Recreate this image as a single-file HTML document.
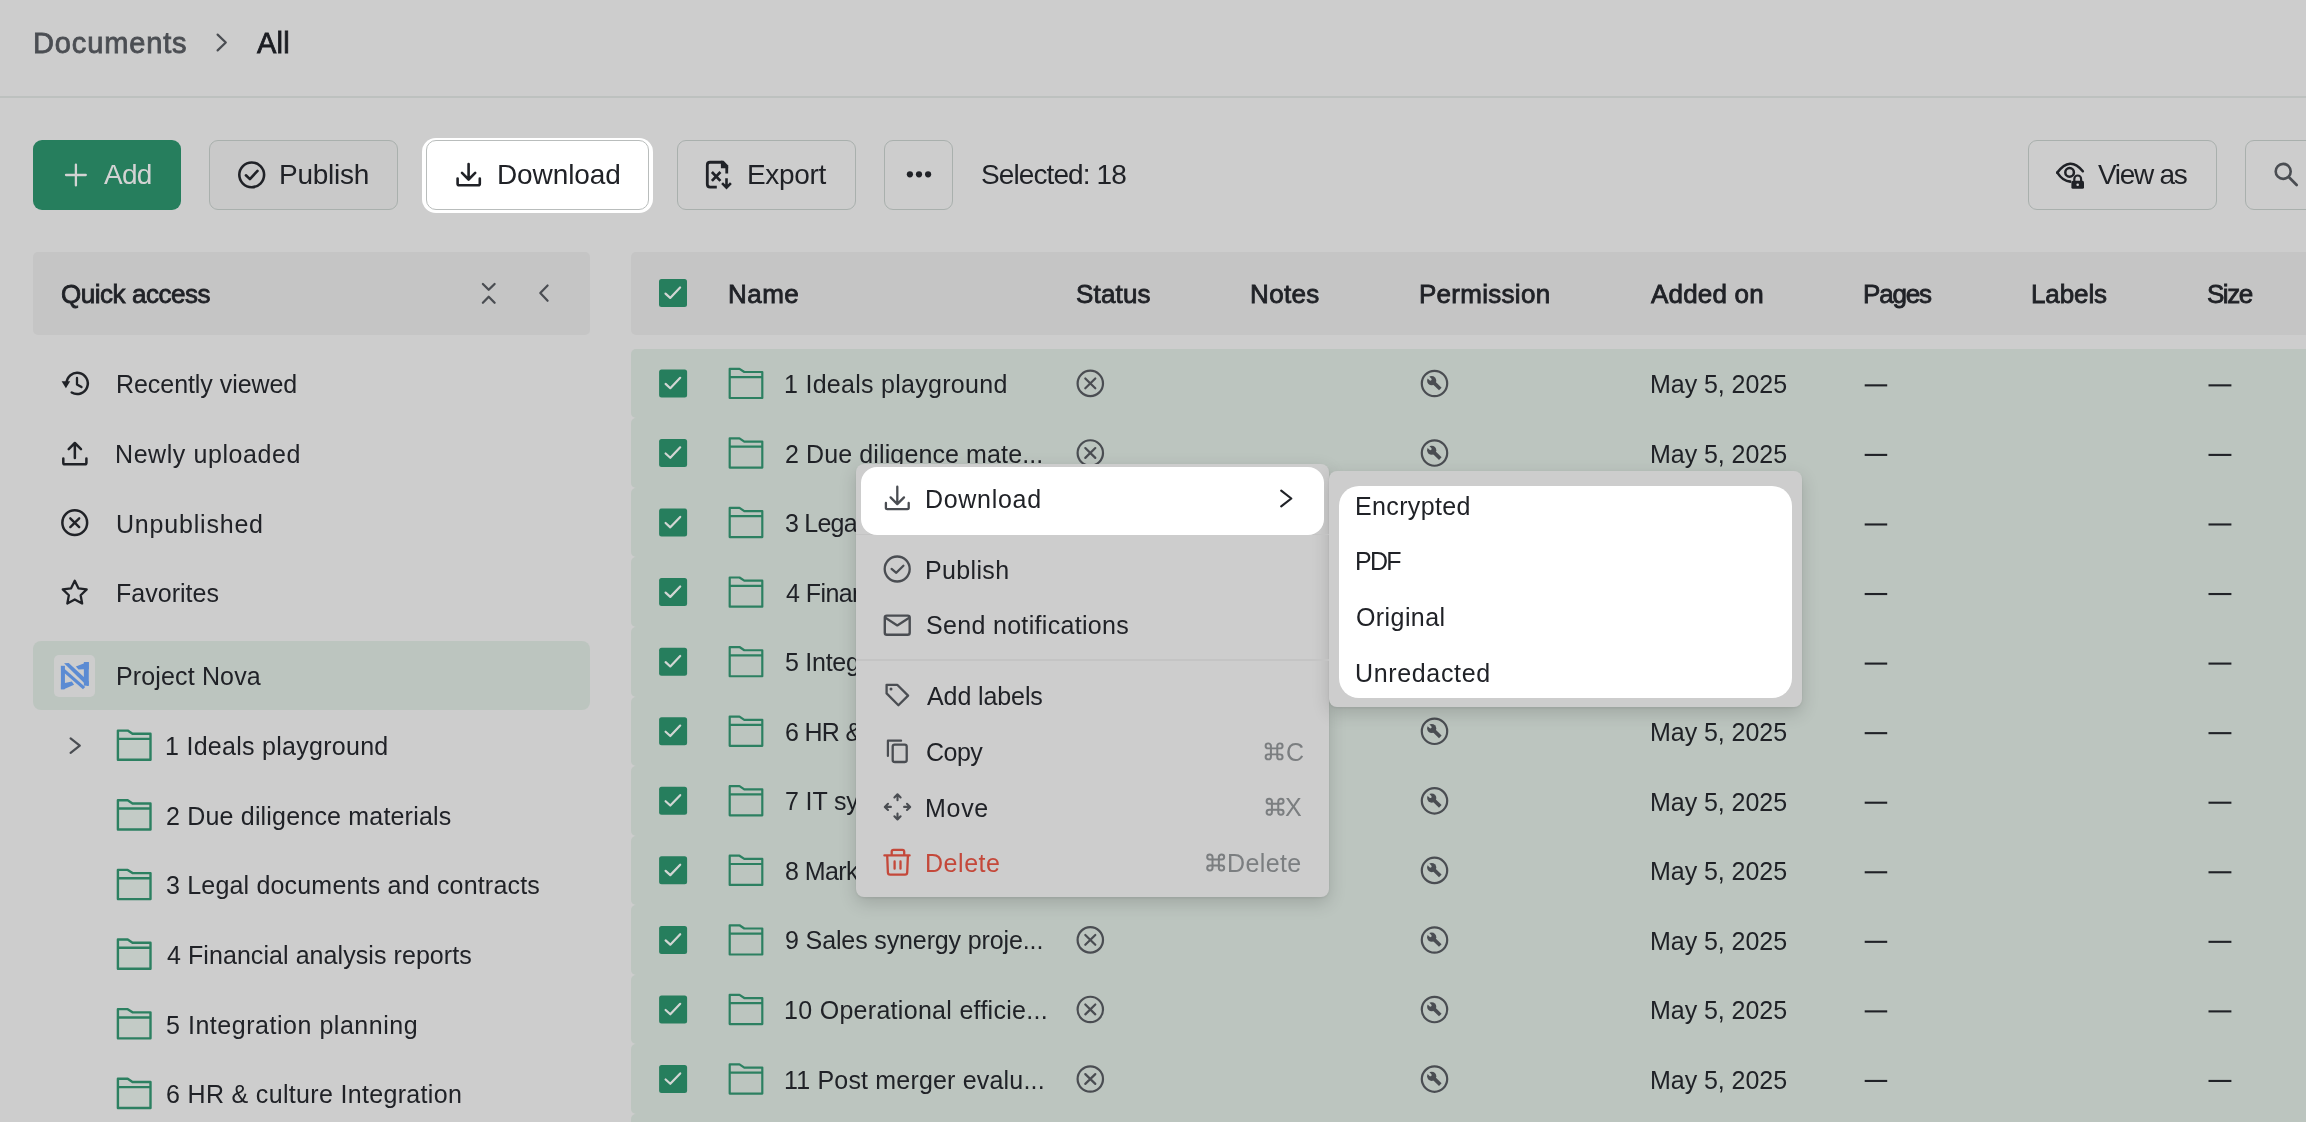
<!DOCTYPE html>
<html><head><meta charset="utf-8">
<style>
html,body{margin:0;padding:0}
body{width:2306px;height:1122px;overflow:hidden;position:relative;background:#cdcdcd;font-family:"Liberation Sans",sans-serif}
.t{position:absolute;z-index:3;will-change:transform}
.b{position:absolute;box-sizing:border-box}
svg{position:absolute;overflow:visible}
.ov .t{z-index:23}
</style></head><body>
<div class="b" style="left:0px;top:96.3px;width:2306px;height:1.6px;background:#bdc1bf;border-radius:0px;"></div>
<div class="b" style="left:33px;top:140px;width:148.3px;height:69.8px;background:#267e5d;border-radius:9px;"></div>
<div class="b" style="left:209.4px;top:140px;width:188.2px;height:69.8px;background:#c9c9c9;border-radius:9px;border:1.7px solid #a9b0ad;"></div>
<div class="b" style="left:676.5px;top:140px;width:179.3px;height:69.8px;background:transparent;border-radius:9px;border:1.7px solid #a9b0ad;"></div>
<div class="b" style="left:884.4px;top:140px;width:68.9px;height:69.8px;background:transparent;border-radius:9px;border:1.7px solid #a9b0ad;"></div>
<div class="b" style="left:2027.5px;top:140px;width:189.1px;height:69.8px;background:transparent;border-radius:9px;border:1.7px solid #a9b0ad;"></div>
<div class="b" style="left:2245.2px;top:140px;width:120px;height:69.8px;background:transparent;border-radius:9px;border:1.7px solid #a9b0ad;"></div>
<div class="b" style="left:422.4px;top:137.8px;width:230.9px;height:74.8px;background:#ffffff;border-radius:14px;"></div>
<div class="b" style="left:426.3px;top:140px;width:222.4px;height:69.6px;background:transparent;border-radius:10px;border:1.4px solid #b9bdbc;"></div>
<div class="b" style="left:33.4px;top:251.6px;width:556.2px;height:83px;background:#c5c5c5;border-radius:5px;"></div>
<div class="b" style="left:33.4px;top:641px;width:556.2px;height:69px;background:#bcc5bf;border-radius:8px;"></div>
<div class="b" style="left:54.2px;top:654.9px;width:41.3px;height:41.9px;background:#cdcdcd;border-radius:5px;"></div>
<div class="b" style="left:631.3px;top:251.6px;width:1760px;height:83.2px;background:#c5c5c5;border-radius:5px;"></div>
<div class="b" style="left:631.3px;top:348.8px;width:1760px;height:69.56px;background:#bcc5bf;border-radius:5px;"></div>
<div class="b" style="left:631.3px;top:418.36px;width:1760px;height:69.56px;background:#bcc5bf;border-radius:5px;"></div>
<div class="b" style="left:631.3px;top:487.92px;width:1760px;height:69.56px;background:#bcc5bf;border-radius:5px;"></div>
<div class="b" style="left:631.3px;top:557.48px;width:1760px;height:69.56px;background:#bcc5bf;border-radius:5px;"></div>
<div class="b" style="left:631.3px;top:627.04px;width:1760px;height:69.56px;background:#bcc5bf;border-radius:5px;"></div>
<div class="b" style="left:631.3px;top:696.6px;width:1760px;height:69.56px;background:#bcc5bf;border-radius:5px;"></div>
<div class="b" style="left:631.3px;top:766.1600000000001px;width:1760px;height:69.56px;background:#bcc5bf;border-radius:5px;"></div>
<div class="b" style="left:631.3px;top:835.72px;width:1760px;height:69.56px;background:#bcc5bf;border-radius:5px;"></div>
<div class="b" style="left:631.3px;top:905.28px;width:1760px;height:69.56px;background:#bcc5bf;border-radius:5px;"></div>
<div class="b" style="left:631.3px;top:974.8399999999999px;width:1760px;height:69.56px;background:#bcc5bf;border-radius:5px;"></div>
<div class="b" style="left:631.3px;top:1044.4px;width:1760px;height:69.56px;background:#bcc5bf;border-radius:5px;"></div>
<div class="b" style="left:631.3px;top:1113.96px;width:1760px;height:69.56px;background:#bcc5bf;border-radius:5px;"></div>
<svg style="left:0;top:0;z-index:2" width="2306" height="1122" viewBox="0 0 2306 1122"><path d="M217.6,34.6 L225.8,42.5 L217.6,50.4" fill="none" stroke="#4a4d52" stroke-width="2.2" stroke-linecap="round" stroke-linejoin="round" />
<path d="M66,175 H85.8 M75.9,164.6 V185.4" fill="none" stroke="#d3d3d3" stroke-width="2.3" stroke-linecap="round" stroke-linejoin="round" />
<circle cx="251.7" cy="174.85" r="12.4" fill="none" stroke="#202227" stroke-width="2.6"/>
<path d="M245.9,175.3 L249.9,179.1 L257.5,170.9" fill="none" stroke="#202227" stroke-width="2.6" stroke-linecap="round" stroke-linejoin="round" />
<path d="M468.6,164 V179.3 M462,172.9 L468.6,179.5 L475.2,172.9" fill="none" stroke="#202227" stroke-width="2.6" stroke-linecap="round" stroke-linejoin="round" />
<path d="M457.6,178.6 V183.8 Q457.6,185.3 459.1,185.3 H478.3 Q479.8,185.3 479.8,183.8 V178.6" fill="none" stroke="#202227" stroke-width="2.6" stroke-linecap="round" stroke-linejoin="round" />
<path d="M722.5,162.25 H710.1 Q707.3,162.25 707.3,165 V184.3 Q707.3,187.1 710.1,187.1 H716.8 M726.75,166.6 V173.5" fill="none" stroke="#202227" stroke-width="2.8"/>
<path d="M720.9,160.85 H723.6 L728.15,165.4 V168.3 H720.9 Z" fill="#202227"/>
<path d="M711.9,172 L720.4,180.9 M720.4,172 L711.9,180.9" fill="none" stroke="#202227" stroke-width="2.7"/>
<path d="M726.5,178.2 V186.6 M722.1,183.2 L726.5,187.6 L730.9,183.2" fill="none" stroke="#202227" stroke-width="2.6"/>
<circle cx="909.9" cy="174.3" r="3.1" fill="#202227"/>
<circle cx="919.0" cy="174.3" r="3.1" fill="#202227"/>
<circle cx="928.1" cy="174.3" r="3.1" fill="#202227"/>
<path d="M2057.3,172.6 Q2070,155.5 2082.8,171.2" fill="none" stroke="#202227" stroke-width="2.6" stroke-linecap="round" stroke-linejoin="round" />
<path d="M2057.3,172.6 Q2063,181.3 2070.2,181.6" fill="none" stroke="#202227" stroke-width="2.6" stroke-linecap="round" stroke-linejoin="round" />
<circle cx="2069.6" cy="172.4" r="4.3" fill="none" stroke="#202227" stroke-width="2.5"/>
<rect x="2071.4" y="180.8" width="12.6" height="8" rx="1.6" fill="#202227"/>
<path d="M2074.3,181 V178.9 A3.4,3.4 0 0 1 2081.1,178.9 V181" fill="none" stroke="#202227" stroke-width="2.2" stroke-linecap="round" stroke-linejoin="round" />
<circle cx="2077.7" cy="184.8" r="1.3" fill="#cdcdcd"/>
<circle cx="2283.2" cy="171.4" r="7.5" fill="none" stroke="#4a4d52" stroke-width="2.6"/>
<path d="M2289,177.3 L2296.7,185" fill="none" stroke="#4a4d52" stroke-width="2.7" stroke-linecap="round" stroke-linejoin="round" />
<path d="M482.9,284 L488.7,289.8 L494.6,284 M482.9,302.7 L488.7,296.8 L494.6,302.7" fill="none" stroke="#4a4d52" stroke-width="2.3" stroke-linecap="round" stroke-linejoin="round" />
<path d="M547.6,285.5 L540.3,293.1 L547.6,300.8" fill="none" stroke="#4a4d52" stroke-width="2.2" stroke-linecap="round" stroke-linejoin="round" />
<path d="M66.6,383.4 A10.6,10.6 0 1 1 71.7,392.5" fill="none" stroke="#202227" stroke-width="2.5" stroke-linecap="round" stroke-linejoin="round" />
<path d="M61.6,381.2 H70.2 L65.9,388.2 Z" fill="#202227"/>
<path d="M77,378 V384.4 L81.5,387.1" fill="none" stroke="#202227" stroke-width="2.3" stroke-linecap="round" stroke-linejoin="round" />
<path d="M74.85,443.8 V458 M68.7,449.1 L74.85,443 L81,449.1" fill="none" stroke="#202227" stroke-width="2.5" stroke-linecap="round" stroke-linejoin="round" />
<path d="M63.3,458.4 V462.7 Q63.3,464.3 64.9,464.3 H84.8 Q86.4,464.3 86.4,462.7 V458.4" fill="none" stroke="#202227" stroke-width="2.5" stroke-linecap="round" stroke-linejoin="round" />
<circle cx="74.75" cy="522.7" r="12.4" fill="none" stroke="#202227" stroke-width="2.5"/>
<path d="M70.3,518.3 L79.2,527.1 M79.2,518.3 L70.3,527.1" fill="none" stroke="#202227" stroke-width="2.4" stroke-linecap="round" stroke-linejoin="round" />
<path d="M74.75,580.70 L78.39,588.28 L86.73,589.41 L80.65,595.22 L82.16,603.49 L74.75,599.50 L67.34,603.49 L68.85,595.22 L62.77,589.41 L71.11,588.28 Z" fill="none" stroke="#202227" stroke-width="2.3" stroke-linejoin="round"/>
<g transform="translate(50,650) scale(0.044563279857397504)">
<polygon points="245,355 790,830 740,880 245,450" fill="#5b8bd3"/>
<rect x="245" y="355" width="90" height="525" fill="#5b8bd3"/>
<polygon points="245,880 245,760 335,740 490,705 540,780 310,880" fill="#5b8bd3"/>
<polygon points="315,300 420,290 870,705 870,800 835,810" fill="#5b8bd3"/>
<rect x="760" y="270" width="110" height="530" fill="#5b8bd3"/>
<polygon points="580,370 800,285 870,270 870,430 760,430 640,440" fill="#5b8bd3"/>
</g>
<path d="M70.6,738.4 L79.8,745.6 L70.6,752.8" fill="none" stroke="#4a4d52" stroke-width="2.2" stroke-linecap="round" stroke-linejoin="round" />
<g transform="translate(116.7,729.4)"><path d="M1.2,1.2 H11 L15.8,4.4 H33.8 V30.4 H1.2 Z" fill="#c3cbc6" stroke="#2c8061" stroke-width="2.4" stroke-linejoin="round"/><path d="M1.2,9.5 H33.8" stroke="#2c8061" stroke-width="2.4"/></g>
<g transform="translate(116.7,799.04)"><path d="M1.2,1.2 H11 L15.8,4.4 H33.8 V30.4 H1.2 Z" fill="#c3cbc6" stroke="#2c8061" stroke-width="2.4" stroke-linejoin="round"/><path d="M1.2,9.5 H33.8" stroke="#2c8061" stroke-width="2.4"/></g>
<g transform="translate(116.7,868.68)"><path d="M1.2,1.2 H11 L15.8,4.4 H33.8 V30.4 H1.2 Z" fill="#c3cbc6" stroke="#2c8061" stroke-width="2.4" stroke-linejoin="round"/><path d="M1.2,9.5 H33.8" stroke="#2c8061" stroke-width="2.4"/></g>
<g transform="translate(116.7,938.3199999999999)"><path d="M1.2,1.2 H11 L15.8,4.4 H33.8 V30.4 H1.2 Z" fill="#c3cbc6" stroke="#2c8061" stroke-width="2.4" stroke-linejoin="round"/><path d="M1.2,9.5 H33.8" stroke="#2c8061" stroke-width="2.4"/></g>
<g transform="translate(116.7,1007.96)"><path d="M1.2,1.2 H11 L15.8,4.4 H33.8 V30.4 H1.2 Z" fill="#c3cbc6" stroke="#2c8061" stroke-width="2.4" stroke-linejoin="round"/><path d="M1.2,9.5 H33.8" stroke="#2c8061" stroke-width="2.4"/></g>
<g transform="translate(116.7,1077.6)"><path d="M1.2,1.2 H11 L15.8,4.4 H33.8 V30.4 H1.2 Z" fill="#c3cbc6" stroke="#2c8061" stroke-width="2.4" stroke-linejoin="round"/><path d="M1.2,9.5 H33.8" stroke="#2c8061" stroke-width="2.4"/></g>
<g transform="translate(659,279.1)"><rect x="0" y="0" width="28" height="28" rx="2.5" fill="#267e5d"/><path d="M6.5,14.5 L11.2,18.8 L21.1,8.4" fill="none" stroke="#d3d6d4" stroke-width="2.2" stroke-linecap="round" stroke-linejoin="round"/></g>
<g transform="translate(659.1,369.4)"><rect x="0" y="0" width="28" height="28" rx="2.5" fill="#267e5d"/><path d="M6.5,14.5 L11.2,18.8 L21.1,8.4" fill="none" stroke="#d3d6d4" stroke-width="2.2" stroke-linecap="round" stroke-linejoin="round"/></g>
<g transform="translate(728.5,367.6)"><path d="M1.2,1.2 H11 L15.8,4.4 H33.8 V30.4 H1.2 Z" fill="#bcc5bf" stroke="#2c8061" stroke-width="2.2" stroke-linejoin="round"/><path d="M1.2,9.5 H33.8" stroke="#2c8061" stroke-width="2.2"/></g>
<g transform="translate(1076.5,369.6)"><circle cx="13.8" cy="13.8" r="12.7" fill="none" stroke="#4a4d52" stroke-width="2.2"/><path d="M8.8,8.9 L18.8,18.7 M18.8,8.9 L8.8,18.7" stroke="#4a4d52" stroke-width="2.2" stroke-linecap="round"/></g>
<g transform="translate(1420.7,369.6)"><circle cx="13.8" cy="13.9" r="12.7" fill="none" stroke="#4a4d52" stroke-width="2.2"/><path d="M12,12 L19.6,19.4" stroke="#4a4d52" stroke-width="3.7" stroke-linecap="butt"/><circle cx="11" cy="11.1" r="4.6" fill="#4a4d52"/><path d="M9.7,9.8 L7.1,7.2" stroke="#bcc5bf" stroke-width="2.5" stroke-linecap="round"/></g>
<rect x="1864.7" y="384.30" width="22.5" height="2.1" fill="#202227"/>
<rect x="2208.5" y="384.30" width="22.9" height="2.1" fill="#202227"/>
<g transform="translate(659.1,438.96)"><rect x="0" y="0" width="28" height="28" rx="2.5" fill="#267e5d"/><path d="M6.5,14.5 L11.2,18.8 L21.1,8.4" fill="none" stroke="#d3d6d4" stroke-width="2.2" stroke-linecap="round" stroke-linejoin="round"/></g>
<g transform="translate(728.5,437.16)"><path d="M1.2,1.2 H11 L15.8,4.4 H33.8 V30.4 H1.2 Z" fill="#bcc5bf" stroke="#2c8061" stroke-width="2.2" stroke-linejoin="round"/><path d="M1.2,9.5 H33.8" stroke="#2c8061" stroke-width="2.2"/></g>
<g transform="translate(1076.5,439.16)"><circle cx="13.8" cy="13.8" r="12.7" fill="none" stroke="#4a4d52" stroke-width="2.2"/><path d="M8.8,8.9 L18.8,18.7 M18.8,8.9 L8.8,18.7" stroke="#4a4d52" stroke-width="2.2" stroke-linecap="round"/></g>
<g transform="translate(1420.7,439.16)"><circle cx="13.8" cy="13.9" r="12.7" fill="none" stroke="#4a4d52" stroke-width="2.2"/><path d="M12,12 L19.6,19.4" stroke="#4a4d52" stroke-width="3.7" stroke-linecap="butt"/><circle cx="11" cy="11.1" r="4.6" fill="#4a4d52"/><path d="M9.7,9.8 L7.1,7.2" stroke="#bcc5bf" stroke-width="2.5" stroke-linecap="round"/></g>
<rect x="1864.7" y="453.86" width="22.5" height="2.1" fill="#202227"/>
<rect x="2208.5" y="453.86" width="22.9" height="2.1" fill="#202227"/>
<g transform="translate(659.1,508.52)"><rect x="0" y="0" width="28" height="28" rx="2.5" fill="#267e5d"/><path d="M6.5,14.5 L11.2,18.8 L21.1,8.4" fill="none" stroke="#d3d6d4" stroke-width="2.2" stroke-linecap="round" stroke-linejoin="round"/></g>
<g transform="translate(728.5,506.72)"><path d="M1.2,1.2 H11 L15.8,4.4 H33.8 V30.4 H1.2 Z" fill="#bcc5bf" stroke="#2c8061" stroke-width="2.2" stroke-linejoin="round"/><path d="M1.2,9.5 H33.8" stroke="#2c8061" stroke-width="2.2"/></g>
<g transform="translate(1076.5,508.72)"><circle cx="13.8" cy="13.8" r="12.7" fill="none" stroke="#4a4d52" stroke-width="2.2"/><path d="M8.8,8.9 L18.8,18.7 M18.8,8.9 L8.8,18.7" stroke="#4a4d52" stroke-width="2.2" stroke-linecap="round"/></g>
<g transform="translate(1420.7,508.72)"><circle cx="13.8" cy="13.9" r="12.7" fill="none" stroke="#4a4d52" stroke-width="2.2"/><path d="M12,12 L19.6,19.4" stroke="#4a4d52" stroke-width="3.7" stroke-linecap="butt"/><circle cx="11" cy="11.1" r="4.6" fill="#4a4d52"/><path d="M9.7,9.8 L7.1,7.2" stroke="#bcc5bf" stroke-width="2.5" stroke-linecap="round"/></g>
<rect x="1864.7" y="523.42" width="22.5" height="2.1" fill="#202227"/>
<rect x="2208.5" y="523.42" width="22.9" height="2.1" fill="#202227"/>
<g transform="translate(659.1,578.08)"><rect x="0" y="0" width="28" height="28" rx="2.5" fill="#267e5d"/><path d="M6.5,14.5 L11.2,18.8 L21.1,8.4" fill="none" stroke="#d3d6d4" stroke-width="2.2" stroke-linecap="round" stroke-linejoin="round"/></g>
<g transform="translate(728.5,576.2800000000001)"><path d="M1.2,1.2 H11 L15.8,4.4 H33.8 V30.4 H1.2 Z" fill="#bcc5bf" stroke="#2c8061" stroke-width="2.2" stroke-linejoin="round"/><path d="M1.2,9.5 H33.8" stroke="#2c8061" stroke-width="2.2"/></g>
<g transform="translate(1076.5,578.2800000000001)"><circle cx="13.8" cy="13.8" r="12.7" fill="none" stroke="#4a4d52" stroke-width="2.2"/><path d="M8.8,8.9 L18.8,18.7 M18.8,8.9 L8.8,18.7" stroke="#4a4d52" stroke-width="2.2" stroke-linecap="round"/></g>
<g transform="translate(1420.7,578.2800000000001)"><circle cx="13.8" cy="13.9" r="12.7" fill="none" stroke="#4a4d52" stroke-width="2.2"/><path d="M12,12 L19.6,19.4" stroke="#4a4d52" stroke-width="3.7" stroke-linecap="butt"/><circle cx="11" cy="11.1" r="4.6" fill="#4a4d52"/><path d="M9.7,9.8 L7.1,7.2" stroke="#bcc5bf" stroke-width="2.5" stroke-linecap="round"/></g>
<rect x="1864.7" y="592.98" width="22.5" height="2.1" fill="#202227"/>
<rect x="2208.5" y="592.98" width="22.9" height="2.1" fill="#202227"/>
<g transform="translate(659.1,647.64)"><rect x="0" y="0" width="28" height="28" rx="2.5" fill="#267e5d"/><path d="M6.5,14.5 L11.2,18.8 L21.1,8.4" fill="none" stroke="#d3d6d4" stroke-width="2.2" stroke-linecap="round" stroke-linejoin="round"/></g>
<g transform="translate(728.5,645.84)"><path d="M1.2,1.2 H11 L15.8,4.4 H33.8 V30.4 H1.2 Z" fill="#bcc5bf" stroke="#2c8061" stroke-width="2.2" stroke-linejoin="round"/><path d="M1.2,9.5 H33.8" stroke="#2c8061" stroke-width="2.2"/></g>
<g transform="translate(1076.5,647.84)"><circle cx="13.8" cy="13.8" r="12.7" fill="none" stroke="#4a4d52" stroke-width="2.2"/><path d="M8.8,8.9 L18.8,18.7 M18.8,8.9 L8.8,18.7" stroke="#4a4d52" stroke-width="2.2" stroke-linecap="round"/></g>
<g transform="translate(1420.7,647.84)"><circle cx="13.8" cy="13.9" r="12.7" fill="none" stroke="#4a4d52" stroke-width="2.2"/><path d="M12,12 L19.6,19.4" stroke="#4a4d52" stroke-width="3.7" stroke-linecap="butt"/><circle cx="11" cy="11.1" r="4.6" fill="#4a4d52"/><path d="M9.7,9.8 L7.1,7.2" stroke="#bcc5bf" stroke-width="2.5" stroke-linecap="round"/></g>
<rect x="1864.7" y="662.54" width="22.5" height="2.1" fill="#202227"/>
<rect x="2208.5" y="662.54" width="22.9" height="2.1" fill="#202227"/>
<g transform="translate(659.1,717.1999999999999)"><rect x="0" y="0" width="28" height="28" rx="2.5" fill="#267e5d"/><path d="M6.5,14.5 L11.2,18.8 L21.1,8.4" fill="none" stroke="#d3d6d4" stroke-width="2.2" stroke-linecap="round" stroke-linejoin="round"/></g>
<g transform="translate(728.5,715.4)"><path d="M1.2,1.2 H11 L15.8,4.4 H33.8 V30.4 H1.2 Z" fill="#bcc5bf" stroke="#2c8061" stroke-width="2.2" stroke-linejoin="round"/><path d="M1.2,9.5 H33.8" stroke="#2c8061" stroke-width="2.2"/></g>
<g transform="translate(1076.5,717.4)"><circle cx="13.8" cy="13.8" r="12.7" fill="none" stroke="#4a4d52" stroke-width="2.2"/><path d="M8.8,8.9 L18.8,18.7 M18.8,8.9 L8.8,18.7" stroke="#4a4d52" stroke-width="2.2" stroke-linecap="round"/></g>
<g transform="translate(1420.7,717.4)"><circle cx="13.8" cy="13.9" r="12.7" fill="none" stroke="#4a4d52" stroke-width="2.2"/><path d="M12,12 L19.6,19.4" stroke="#4a4d52" stroke-width="3.7" stroke-linecap="butt"/><circle cx="11" cy="11.1" r="4.6" fill="#4a4d52"/><path d="M9.7,9.8 L7.1,7.2" stroke="#bcc5bf" stroke-width="2.5" stroke-linecap="round"/></g>
<rect x="1864.7" y="732.10" width="22.5" height="2.1" fill="#202227"/>
<rect x="2208.5" y="732.10" width="22.9" height="2.1" fill="#202227"/>
<g transform="translate(659.1,786.76)"><rect x="0" y="0" width="28" height="28" rx="2.5" fill="#267e5d"/><path d="M6.5,14.5 L11.2,18.8 L21.1,8.4" fill="none" stroke="#d3d6d4" stroke-width="2.2" stroke-linecap="round" stroke-linejoin="round"/></g>
<g transform="translate(728.5,784.96)"><path d="M1.2,1.2 H11 L15.8,4.4 H33.8 V30.4 H1.2 Z" fill="#bcc5bf" stroke="#2c8061" stroke-width="2.2" stroke-linejoin="round"/><path d="M1.2,9.5 H33.8" stroke="#2c8061" stroke-width="2.2"/></g>
<g transform="translate(1076.5,786.96)"><circle cx="13.8" cy="13.8" r="12.7" fill="none" stroke="#4a4d52" stroke-width="2.2"/><path d="M8.8,8.9 L18.8,18.7 M18.8,8.9 L8.8,18.7" stroke="#4a4d52" stroke-width="2.2" stroke-linecap="round"/></g>
<g transform="translate(1420.7,786.96)"><circle cx="13.8" cy="13.9" r="12.7" fill="none" stroke="#4a4d52" stroke-width="2.2"/><path d="M12,12 L19.6,19.4" stroke="#4a4d52" stroke-width="3.7" stroke-linecap="butt"/><circle cx="11" cy="11.1" r="4.6" fill="#4a4d52"/><path d="M9.7,9.8 L7.1,7.2" stroke="#bcc5bf" stroke-width="2.5" stroke-linecap="round"/></g>
<rect x="1864.7" y="801.66" width="22.5" height="2.1" fill="#202227"/>
<rect x="2208.5" y="801.66" width="22.9" height="2.1" fill="#202227"/>
<g transform="translate(659.1,856.32)"><rect x="0" y="0" width="28" height="28" rx="2.5" fill="#267e5d"/><path d="M6.5,14.5 L11.2,18.8 L21.1,8.4" fill="none" stroke="#d3d6d4" stroke-width="2.2" stroke-linecap="round" stroke-linejoin="round"/></g>
<g transform="translate(728.5,854.5200000000001)"><path d="M1.2,1.2 H11 L15.8,4.4 H33.8 V30.4 H1.2 Z" fill="#bcc5bf" stroke="#2c8061" stroke-width="2.2" stroke-linejoin="round"/><path d="M1.2,9.5 H33.8" stroke="#2c8061" stroke-width="2.2"/></g>
<g transform="translate(1076.5,856.5200000000001)"><circle cx="13.8" cy="13.8" r="12.7" fill="none" stroke="#4a4d52" stroke-width="2.2"/><path d="M8.8,8.9 L18.8,18.7 M18.8,8.9 L8.8,18.7" stroke="#4a4d52" stroke-width="2.2" stroke-linecap="round"/></g>
<g transform="translate(1420.7,856.5200000000001)"><circle cx="13.8" cy="13.9" r="12.7" fill="none" stroke="#4a4d52" stroke-width="2.2"/><path d="M12,12 L19.6,19.4" stroke="#4a4d52" stroke-width="3.7" stroke-linecap="butt"/><circle cx="11" cy="11.1" r="4.6" fill="#4a4d52"/><path d="M9.7,9.8 L7.1,7.2" stroke="#bcc5bf" stroke-width="2.5" stroke-linecap="round"/></g>
<rect x="1864.7" y="871.22" width="22.5" height="2.1" fill="#202227"/>
<rect x="2208.5" y="871.22" width="22.9" height="2.1" fill="#202227"/>
<g transform="translate(659.1,925.88)"><rect x="0" y="0" width="28" height="28" rx="2.5" fill="#267e5d"/><path d="M6.5,14.5 L11.2,18.8 L21.1,8.4" fill="none" stroke="#d3d6d4" stroke-width="2.2" stroke-linecap="round" stroke-linejoin="round"/></g>
<g transform="translate(728.5,924.08)"><path d="M1.2,1.2 H11 L15.8,4.4 H33.8 V30.4 H1.2 Z" fill="#bcc5bf" stroke="#2c8061" stroke-width="2.2" stroke-linejoin="round"/><path d="M1.2,9.5 H33.8" stroke="#2c8061" stroke-width="2.2"/></g>
<g transform="translate(1076.5,926.08)"><circle cx="13.8" cy="13.8" r="12.7" fill="none" stroke="#4a4d52" stroke-width="2.2"/><path d="M8.8,8.9 L18.8,18.7 M18.8,8.9 L8.8,18.7" stroke="#4a4d52" stroke-width="2.2" stroke-linecap="round"/></g>
<g transform="translate(1420.7,926.08)"><circle cx="13.8" cy="13.9" r="12.7" fill="none" stroke="#4a4d52" stroke-width="2.2"/><path d="M12,12 L19.6,19.4" stroke="#4a4d52" stroke-width="3.7" stroke-linecap="butt"/><circle cx="11" cy="11.1" r="4.6" fill="#4a4d52"/><path d="M9.7,9.8 L7.1,7.2" stroke="#bcc5bf" stroke-width="2.5" stroke-linecap="round"/></g>
<rect x="1864.7" y="940.78" width="22.5" height="2.1" fill="#202227"/>
<rect x="2208.5" y="940.78" width="22.9" height="2.1" fill="#202227"/>
<g transform="translate(659.1,995.4399999999999)"><rect x="0" y="0" width="28" height="28" rx="2.5" fill="#267e5d"/><path d="M6.5,14.5 L11.2,18.8 L21.1,8.4" fill="none" stroke="#d3d6d4" stroke-width="2.2" stroke-linecap="round" stroke-linejoin="round"/></g>
<g transform="translate(728.5,993.64)"><path d="M1.2,1.2 H11 L15.8,4.4 H33.8 V30.4 H1.2 Z" fill="#bcc5bf" stroke="#2c8061" stroke-width="2.2" stroke-linejoin="round"/><path d="M1.2,9.5 H33.8" stroke="#2c8061" stroke-width="2.2"/></g>
<g transform="translate(1076.5,995.64)"><circle cx="13.8" cy="13.8" r="12.7" fill="none" stroke="#4a4d52" stroke-width="2.2"/><path d="M8.8,8.9 L18.8,18.7 M18.8,8.9 L8.8,18.7" stroke="#4a4d52" stroke-width="2.2" stroke-linecap="round"/></g>
<g transform="translate(1420.7,995.64)"><circle cx="13.8" cy="13.9" r="12.7" fill="none" stroke="#4a4d52" stroke-width="2.2"/><path d="M12,12 L19.6,19.4" stroke="#4a4d52" stroke-width="3.7" stroke-linecap="butt"/><circle cx="11" cy="11.1" r="4.6" fill="#4a4d52"/><path d="M9.7,9.8 L7.1,7.2" stroke="#bcc5bf" stroke-width="2.5" stroke-linecap="round"/></g>
<rect x="1864.7" y="1010.34" width="22.5" height="2.1" fill="#202227"/>
<rect x="2208.5" y="1010.34" width="22.9" height="2.1" fill="#202227"/>
<g transform="translate(659.1,1065.0)"><rect x="0" y="0" width="28" height="28" rx="2.5" fill="#267e5d"/><path d="M6.5,14.5 L11.2,18.8 L21.1,8.4" fill="none" stroke="#d3d6d4" stroke-width="2.2" stroke-linecap="round" stroke-linejoin="round"/></g>
<g transform="translate(728.5,1063.1999999999998)"><path d="M1.2,1.2 H11 L15.8,4.4 H33.8 V30.4 H1.2 Z" fill="#bcc5bf" stroke="#2c8061" stroke-width="2.2" stroke-linejoin="round"/><path d="M1.2,9.5 H33.8" stroke="#2c8061" stroke-width="2.2"/></g>
<g transform="translate(1076.5,1065.1999999999998)"><circle cx="13.8" cy="13.8" r="12.7" fill="none" stroke="#4a4d52" stroke-width="2.2"/><path d="M8.8,8.9 L18.8,18.7 M18.8,8.9 L8.8,18.7" stroke="#4a4d52" stroke-width="2.2" stroke-linecap="round"/></g>
<g transform="translate(1420.7,1065.1999999999998)"><circle cx="13.8" cy="13.9" r="12.7" fill="none" stroke="#4a4d52" stroke-width="2.2"/><path d="M12,12 L19.6,19.4" stroke="#4a4d52" stroke-width="3.7" stroke-linecap="butt"/><circle cx="11" cy="11.1" r="4.6" fill="#4a4d52"/><path d="M9.7,9.8 L7.1,7.2" stroke="#bcc5bf" stroke-width="2.5" stroke-linecap="round"/></g>
<rect x="1864.7" y="1079.90" width="22.5" height="2.1" fill="#202227"/>
<rect x="2208.5" y="1079.90" width="22.9" height="2.1" fill="#202227"/></svg>
<div class="t" style="left:32.60px;top:29.14px;font-family:'Liberation Sans', sans-serif;font-size:29px;line-height:29px;-webkit-text-stroke:0.8px #4b4e53;letter-spacing:0.863px;white-space:nowrap;color:#4b4e53;">Documents</div>
<div class="t" style="left:256.80px;top:29.14px;font-family:'Liberation Sans', sans-serif;font-size:29px;line-height:29px;-webkit-text-stroke:0.8px #1b1d22;letter-spacing:0.200px;white-space:nowrap;color:#1b1d22;">All</div>
<div class="t" style="left:104.00px;top:160.98px;font-family:'Liberation Sans', sans-serif;font-size:28px;line-height:28px;letter-spacing:-0.800px;white-space:nowrap;color:#d3d3d3;">Add</div>
<div class="t" style="left:279.00px;top:160.98px;font-family:'Liberation Sans', sans-serif;font-size:28px;line-height:28px;letter-spacing:-0.267px;white-space:nowrap;color:#202227;">Publish</div>
<div class="t" style="left:496.50px;top:160.98px;font-family:'Liberation Sans', sans-serif;font-size:28px;line-height:28px;letter-spacing:-0.100px;white-space:nowrap;color:#202227;">Download</div>
<div class="t" style="left:747.40px;top:160.68px;font-family:'Liberation Sans', sans-serif;font-size:28px;line-height:28px;letter-spacing:-0.320px;white-space:nowrap;color:#202227;">Export</div>
<div class="t" style="left:981.20px;top:160.78px;font-family:'Liberation Sans', sans-serif;font-size:28px;line-height:28px;letter-spacing:-0.900px;white-space:nowrap;color:#202227;">Selected: 18</div>
<div class="t" style="left:2098.20px;top:160.78px;font-family:'Liberation Sans', sans-serif;font-size:28px;line-height:28px;letter-spacing:-1.317px;white-space:nowrap;color:#202227;">View as</div>
<div class="t" style="left:60.90px;top:280.96px;font-family:'Liberation Sans', sans-serif;font-size:26px;line-height:26px;-webkit-text-stroke:0.8px #202227;letter-spacing:-0.464px;white-space:nowrap;color:#202227;">Quick access</div>
<div class="t" style="left:116.30px;top:372.00px;font-family:'Liberation Sans', sans-serif;font-size:25px;line-height:25px;letter-spacing:-0.057px;white-space:nowrap;color:#202227;">Recently viewed</div>
<div class="t" style="left:115.20px;top:441.80px;font-family:'Liberation Sans', sans-serif;font-size:25px;line-height:25px;letter-spacing:0.577px;white-space:nowrap;color:#202227;">Newly uploaded</div>
<div class="t" style="left:115.50px;top:511.50px;font-family:'Liberation Sans', sans-serif;font-size:25px;line-height:25px;letter-spacing:0.800px;white-space:nowrap;color:#202227;">Unpublished</div>
<div class="t" style="left:116.40px;top:581.00px;font-family:'Liberation Sans', sans-serif;font-size:25px;line-height:25px;letter-spacing:0.025px;white-space:nowrap;color:#202227;">Favorites</div>
<div class="t" style="left:115.50px;top:664.10px;font-family:'Liberation Sans', sans-serif;font-size:25px;line-height:25px;letter-spacing:0.145px;white-space:nowrap;color:#202227;">Project Nova</div>
<div class="t" style="left:164.50px;top:734.00px;font-family:'Liberation Sans', sans-serif;font-size:25px;line-height:25px;letter-spacing:0.278px;white-space:nowrap;color:#202227;">1 Ideals playground</div>
<div class="t" style="left:165.50px;top:803.64px;font-family:'Liberation Sans', sans-serif;font-size:25px;line-height:25px;letter-spacing:0.188px;white-space:nowrap;color:#202227;">2 Due diligence materials</div>
<div class="t" style="left:165.50px;top:873.28px;font-family:'Liberation Sans', sans-serif;font-size:25px;line-height:25px;letter-spacing:0.183px;white-space:nowrap;color:#202227;">3 Legal documents and contracts</div>
<div class="t" style="left:166.50px;top:942.92px;font-family:'Liberation Sans', sans-serif;font-size:25px;line-height:25px;letter-spacing:0.067px;white-space:nowrap;color:#202227;">4 Financial analysis reports</div>
<div class="t" style="left:165.50px;top:1012.56px;font-family:'Liberation Sans', sans-serif;font-size:25px;line-height:25px;letter-spacing:0.533px;white-space:nowrap;color:#202227;">5 Integration planning</div>
<div class="t" style="left:165.50px;top:1082.20px;font-family:'Liberation Sans', sans-serif;font-size:25px;line-height:25px;letter-spacing:0.328px;white-space:nowrap;color:#202227;">6 HR &amp; culture Integration</div>
<div class="t" style="left:727.80px;top:281.26px;font-family:'Liberation Sans', sans-serif;font-size:26px;line-height:26px;-webkit-text-stroke:0.8px #202227;letter-spacing:0.467px;white-space:nowrap;color:#202227;">Name</div>
<div class="t" style="left:1076.20px;top:281.26px;font-family:'Liberation Sans', sans-serif;font-size:26px;line-height:26px;-webkit-text-stroke:0.8px #202227;letter-spacing:0.160px;white-space:nowrap;color:#202227;">Status</div>
<div class="t" style="left:1249.90px;top:281.26px;font-family:'Liberation Sans', sans-serif;font-size:26px;line-height:26px;-webkit-text-stroke:0.8px #202227;letter-spacing:0.350px;white-space:nowrap;color:#202227;">Notes</div>
<div class="t" style="left:1419.40px;top:281.26px;font-family:'Liberation Sans', sans-serif;font-size:26px;line-height:26px;-webkit-text-stroke:0.8px #202227;letter-spacing:0.278px;white-space:nowrap;color:#202227;">Permission</div>
<div class="t" style="left:1651.00px;top:281.26px;font-family:'Liberation Sans', sans-serif;font-size:26px;line-height:26px;-webkit-text-stroke:0.8px #202227;letter-spacing:0.186px;white-space:nowrap;color:#202227;">Added on</div>
<div class="t" style="left:1862.70px;top:281.26px;font-family:'Liberation Sans', sans-serif;font-size:26px;line-height:26px;-webkit-text-stroke:0.8px #202227;letter-spacing:-1.175px;white-space:nowrap;color:#202227;">Pages</div>
<div class="t" style="left:2031.40px;top:281.26px;font-family:'Liberation Sans', sans-serif;font-size:26px;line-height:26px;-webkit-text-stroke:0.8px #202227;letter-spacing:-0.100px;white-space:nowrap;color:#202227;">Labels</div>
<div class="t" style="left:2207.10px;top:281.26px;font-family:'Liberation Sans', sans-serif;font-size:26px;line-height:26px;-webkit-text-stroke:0.8px #202227;letter-spacing:-1.467px;white-space:nowrap;color:#202227;">Size</div>
<div class="t" style="left:783.50px;top:372.00px;font-family:'Liberation Sans', sans-serif;font-size:25px;line-height:25px;letter-spacing:0.283px;white-space:nowrap;color:#202227;">1 Ideals playground</div>
<div class="t" style="left:1649.90px;top:372.30px;font-family:'Liberation Sans', sans-serif;font-size:25px;line-height:25px;letter-spacing:-0.050px;white-space:nowrap;color:#202227;">May 5, 2025</div>
<div class="t" style="left:784.50px;top:441.56px;font-family:'Liberation Sans', sans-serif;font-size:25px;line-height:25px;letter-spacing:0.114px;white-space:nowrap;color:#202227;">2 Due diligence mate...</div>
<div class="t" style="left:1649.90px;top:441.86px;font-family:'Liberation Sans', sans-serif;font-size:25px;line-height:25px;letter-spacing:-0.050px;white-space:nowrap;color:#202227;">May 5, 2025</div>
<div class="t" style="left:784.50px;top:511.12px;font-family:'Liberation Sans', sans-serif;font-size:25px;line-height:25px;letter-spacing:-0.763px;white-space:nowrap;color:#202227;">3 Legal documents...</div>
<div class="t" style="left:1649.90px;top:511.42px;font-family:'Liberation Sans', sans-serif;font-size:25px;line-height:25px;letter-spacing:-0.050px;white-space:nowrap;color:#202227;">May 5, 2025</div>
<div class="t" style="left:785.50px;top:580.68px;font-family:'Liberation Sans', sans-serif;font-size:25px;line-height:25px;letter-spacing:-0.568px;white-space:nowrap;color:#202227;">4 Financial analysis...</div>
<div class="t" style="left:1649.90px;top:580.98px;font-family:'Liberation Sans', sans-serif;font-size:25px;line-height:25px;letter-spacing:-0.050px;white-space:nowrap;color:#202227;">May 5, 2025</div>
<div class="t" style="left:784.50px;top:650.24px;font-family:'Liberation Sans', sans-serif;font-size:25px;line-height:25px;letter-spacing:-0.262px;white-space:nowrap;color:#202227;">5 Integration plann...</div>
<div class="t" style="left:1649.90px;top:650.54px;font-family:'Liberation Sans', sans-serif;font-size:25px;line-height:25px;letter-spacing:-0.050px;white-space:nowrap;color:#202227;">May 5, 2025</div>
<div class="t" style="left:784.50px;top:719.80px;font-family:'Liberation Sans', sans-serif;font-size:25px;line-height:25px;letter-spacing:-0.690px;white-space:nowrap;color:#202227;">6 HR &amp; culture Inte...</div>
<div class="t" style="left:1649.90px;top:720.10px;font-family:'Liberation Sans', sans-serif;font-size:25px;line-height:25px;letter-spacing:-0.050px;white-space:nowrap;color:#202227;">May 5, 2025</div>
<div class="t" style="left:784.50px;top:789.36px;font-family:'Liberation Sans', sans-serif;font-size:25px;line-height:25px;letter-spacing:-0.119px;white-space:nowrap;color:#202227;">7 IT systems integr...</div>
<div class="t" style="left:1649.90px;top:789.66px;font-family:'Liberation Sans', sans-serif;font-size:25px;line-height:25px;letter-spacing:-0.050px;white-space:nowrap;color:#202227;">May 5, 2025</div>
<div class="t" style="left:784.50px;top:858.92px;font-family:'Liberation Sans', sans-serif;font-size:25px;line-height:25px;letter-spacing:-0.595px;white-space:nowrap;color:#202227;">8 Marketing strateg...</div>
<div class="t" style="left:1649.90px;top:859.22px;font-family:'Liberation Sans', sans-serif;font-size:25px;line-height:25px;letter-spacing:-0.050px;white-space:nowrap;color:#202227;">May 5, 2025</div>
<div class="t" style="left:784.50px;top:928.48px;font-family:'Liberation Sans', sans-serif;font-size:25px;line-height:25px;letter-spacing:-0.126px;white-space:nowrap;color:#202227;">9 Sales synergy proje...</div>
<div class="t" style="left:1649.90px;top:928.78px;font-family:'Liberation Sans', sans-serif;font-size:25px;line-height:25px;letter-spacing:-0.050px;white-space:nowrap;color:#202227;">May 5, 2025</div>
<div class="t" style="left:783.50px;top:998.04px;font-family:'Liberation Sans', sans-serif;font-size:25px;line-height:25px;letter-spacing:0.296px;white-space:nowrap;color:#202227;">10 Operational efficie...</div>
<div class="t" style="left:1649.90px;top:998.34px;font-family:'Liberation Sans', sans-serif;font-size:25px;line-height:25px;letter-spacing:-0.050px;white-space:nowrap;color:#202227;">May 5, 2025</div>
<div class="t" style="left:783.50px;top:1067.60px;font-family:'Liberation Sans', sans-serif;font-size:25px;line-height:25px;letter-spacing:0.182px;white-space:nowrap;color:#202227;">11 Post merger evalu...</div>
<div class="t" style="left:1649.90px;top:1067.90px;font-family:'Liberation Sans', sans-serif;font-size:25px;line-height:25px;letter-spacing:-0.050px;white-space:nowrap;color:#202227;">May 5, 2025</div>
<div class="ov">
<div class="b" style="left:856px;top:463.8px;width:473px;height:432.8px;background:#cdcdcd;border-radius:8px;z-index:10;box-shadow:0 6px 18px rgba(0,0,0,0.16),0 1px 3px rgba(0,0,0,0.08);"></div>
<div class="b" style="left:1329.3px;top:470.5px;width:472.9px;height:236.5px;background:#cdcdcd;border-radius:8px;z-index:10;box-shadow:0 6px 18px rgba(0,0,0,0.16),0 1px 3px rgba(0,0,0,0.08);"></div>
<div class="b" style="left:856px;top:533.6px;width:473px;height:1.2px;background:#c4c4c4;border-radius:0px;z-index:11;"></div>
<div class="b" style="left:856px;top:659.4px;width:473px;height:1.2px;background:#c4c4c4;border-radius:0px;z-index:11;"></div>
<div class="b" style="left:860.5px;top:466.7px;width:463.5px;height:68px;background:#ffffff;border-radius:16px;z-index:12;"></div>
<div class="b" style="left:1338.9px;top:485.6px;width:453.1px;height:212.3px;background:#ffffff;border-radius:20px;z-index:12;"></div>
<svg style="left:0;top:0;z-index:15" width="2306" height="1122" viewBox="0 0 2306 1122"><path d="M897.3,486.7 V503.4 M890.6,497.4 L897.3,504.1 L904,497.4" fill="none" stroke="#4a4d52" stroke-width="2.3" stroke-linecap="round" stroke-linejoin="round" />
<path d="M885.9,503 V507.9 Q885.9,509.2 887.2,509.2 H907.4 Q908.7,509.2 908.7,507.9 V503" fill="none" stroke="#4a4d52" stroke-width="2.3" stroke-linecap="round" stroke-linejoin="round" />
<circle cx="897.2" cy="569" r="12.5" fill="none" stroke="#4a4d52" stroke-width="2.3"/>
<path d="M891.6,568.9 L896.3,572.8 L903.4,565.7" fill="none" stroke="#4a4d52" stroke-width="2.3" stroke-linecap="round" stroke-linejoin="round" />
<rect x="884.8" y="615.6" width="24.9" height="19.2" rx="2" fill="none" stroke="#4a4d52" stroke-width="2.4"/>
<path d="M885.8,618 L897.3,625.5 L908.8,618" fill="none" stroke="#4a4d52" stroke-width="2.2" stroke-linecap="round" stroke-linejoin="round" />
<path d="M886.6,684.8 H897.2 L908.1,695.6 L898.4,705.2 L886.6,693.4 Z" fill="none" stroke="#4a4d52" stroke-width="2.3" stroke-linecap="round" stroke-linejoin="round" />
<circle cx="891" cy="689" r="1.5" fill="#4a4d52"/>
<path d="M887.9,756 V740.7 H901.1" fill="none" stroke="#4a4d52" stroke-width="2.2" stroke-linecap="round" stroke-linejoin="round" />
<rect x="892.7" y="744.6" width="14" height="17.4" rx="2" fill="none" stroke="#4a4d52" stroke-width="2.3"/>
<path d="M897.5,794.6 V800.3 M897.5,813.5 V819.2 M885,806.9 H890.9 M904.1,806.9 H910 M894.4,797.5 L897.5,794.3 L900.6,797.5 M894.4,816.3 L897.5,819.5 L900.6,816.3 M888,803.8 L884.8,806.9 L888,810 M907,803.8 L910.2,806.9 L907,810" fill="none" stroke="#4a4d52" stroke-width="2.1" stroke-linecap="round" stroke-linejoin="round" />
<path d="M884.4,855.4 H909.6 M891.7,855 V851.6 Q891.7,849.8 893.5,849.8 H902.4 Q904.2,849.8 904.2,851.6 V855 M887.2,855.6 L887.9,872.5 Q888,874.6 890.1,874.6 H905 Q907.1,874.6 907.2,872.5 L907.9,855.6 M894.6,861.5 V868.7 M900.5,861.5 V868.7" fill="none" stroke="#c4483a" stroke-width="2.3" stroke-linecap="round" stroke-linejoin="round" />
<path d="M1281.2,490.6 L1291.3,498.5 L1281.2,506.4" fill="none" stroke="#202227" stroke-width="2.2" stroke-linecap="round" stroke-linejoin="round" />
<g transform="translate(1263.6,742.4) scale(1.06,1)"><path d="M6,6 H12 V12 H6 Z M6,6 V3.5 A2.5,2.5 0 1 0 3.5,6 H6 M12,6 V3.5 A2.5,2.5 0 1 1 14.5,6 H12 M12,12 V14.5 A2.5,2.5 0 1 0 14.5,12 H12 M6,12 V14.5 A2.5,2.5 0 1 1 3.5,12 H6" fill="none" stroke="#7b7e80" stroke-width="1.9" transform="translate(0.9,0)"/></g>
<g transform="translate(1264.6,797.8) scale(1.06,1)"><path d="M6,6 H12 V12 H6 Z M6,6 V3.5 A2.5,2.5 0 1 0 3.5,6 H6 M12,6 V3.5 A2.5,2.5 0 1 1 14.5,6 H12 M12,12 V14.5 A2.5,2.5 0 1 0 14.5,12 H12 M6,12 V14.5 A2.5,2.5 0 1 1 3.5,12 H6" fill="none" stroke="#7b7e80" stroke-width="1.9" transform="translate(0.9,0)"/></g>
<g transform="translate(1205.2,853.5) scale(1.06,1)"><path d="M6,6 H12 V12 H6 Z M6,6 V3.5 A2.5,2.5 0 1 0 3.5,6 H6 M12,6 V3.5 A2.5,2.5 0 1 1 14.5,6 H12 M12,12 V14.5 A2.5,2.5 0 1 0 14.5,12 H12 M6,12 V14.5 A2.5,2.5 0 1 1 3.5,12 H6" fill="none" stroke="#7b7e80" stroke-width="1.9" transform="translate(0.9,0)"/></g></svg>
<div class="t" style="left:924.50px;top:487.40px;font-family:'Liberation Sans', sans-serif;font-size:25px;line-height:25px;letter-spacing:0.700px;white-space:nowrap;color:#202227;">Download</div>
<div class="t" style="left:924.50px;top:558.10px;font-family:'Liberation Sans', sans-serif;font-size:25px;line-height:25px;letter-spacing:0.350px;white-space:nowrap;color:#202227;">Publish</div>
<div class="t" style="left:925.50px;top:613.30px;font-family:'Liberation Sans', sans-serif;font-size:25px;line-height:25px;letter-spacing:0.318px;white-space:nowrap;color:#202227;">Send notifications</div>
<div class="t" style="left:926.50px;top:684.10px;font-family:'Liberation Sans', sans-serif;font-size:25px;line-height:25px;letter-spacing:-0.100px;white-space:nowrap;color:#202227;">Add labels</div>
<div class="t" style="left:925.50px;top:739.80px;font-family:'Liberation Sans', sans-serif;font-size:25px;line-height:25px;letter-spacing:-0.533px;white-space:nowrap;color:#202227;">Copy</div>
<div class="t" style="left:924.50px;top:795.50px;font-family:'Liberation Sans', sans-serif;font-size:25px;line-height:25px;letter-spacing:0.700px;white-space:nowrap;color:#202227;">Move</div>
<div class="t" style="left:924.50px;top:850.70px;font-family:'Liberation Sans', sans-serif;font-size:25px;line-height:25px;letter-spacing:0.540px;white-space:nowrap;color:#c4483a;">Delete</div>
<div class="t" style="left:1285.60px;top:739.90px;font-family:'Liberation Sans', sans-serif;font-size:25px;line-height:25px;letter-spacing:0.000px;white-space:nowrap;color:#7b7e80;">C</div>
<div class="t" style="left:1284.90px;top:795.40px;font-family:'Liberation Sans', sans-serif;font-size:25px;line-height:25px;letter-spacing:0.000px;white-space:nowrap;color:#7b7e80;">X</div>
<div class="t" style="left:1227.00px;top:851.10px;font-family:'Liberation Sans', sans-serif;font-size:25px;line-height:25px;letter-spacing:0.400px;white-space:nowrap;color:#7b7e80;">Delete</div>
<div class="t" style="left:1355.40px;top:494.00px;font-family:'Liberation Sans', sans-serif;font-size:25px;line-height:25px;letter-spacing:0.362px;white-space:nowrap;color:#202227;">Encrypted</div>
<div class="t" style="left:1355.40px;top:549.10px;font-family:'Liberation Sans', sans-serif;font-size:25px;line-height:25px;letter-spacing:-1.700px;white-space:nowrap;color:#202227;">PDF</div>
<div class="t" style="left:1356.40px;top:605.20px;font-family:'Liberation Sans', sans-serif;font-size:25px;line-height:25px;letter-spacing:0.414px;white-space:nowrap;color:#202227;">Original</div>
<div class="t" style="left:1355.40px;top:660.50px;font-family:'Liberation Sans', sans-serif;font-size:25px;line-height:25px;letter-spacing:0.656px;white-space:nowrap;color:#202227;">Unredacted</div>
</div>
</body></html>
